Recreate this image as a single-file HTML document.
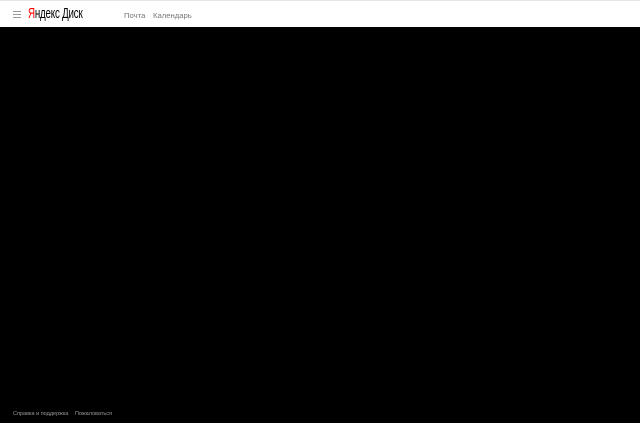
<!DOCTYPE html>
<html><head><meta charset="utf-8"><style>
html,body{margin:0;padding:0;width:640px;height:423px;overflow:hidden;background:#000;font-family:"Liberation Sans",sans-serif;}
.hdr{position:absolute;left:0;top:0;width:640px;height:27px;background:#fff;border-top:1px solid #e6e6e6;box-sizing:border-box;}
.burger{position:absolute;left:13px;top:10px;width:8px;}
.burger i{display:block;height:1px;background:#999;margin-bottom:2px;}
.logo{position:absolute;left:28px;top:4px;font-size:15px;letter-spacing:-0.3px;color:#000;transform:scaleX(0.65);transform-origin:0 0;white-space:nowrap;}
.logo b{color:#f00;font-weight:normal;}
.nav{position:absolute;top:10px;font-size:7.7px;color:#777;}
.foot{position:absolute;top:411px;font-size:5.5px;color:#999;white-space:nowrap;}
</style></head><body>
<div class="hdr">
<div class="burger"><i></i><i></i><i></i></div>
<div class="logo"><b>Я</b>ндекс Диск</div>
<div class="nav" style="left:124px">Почта</div>
<div class="nav" style="left:153px">Календарь</div>
</div>
<div class="foot" style="left:13px">Справка и поддержка</div>
<div class="foot" style="left:75px">Пожаловаться</div>
</body></html>
